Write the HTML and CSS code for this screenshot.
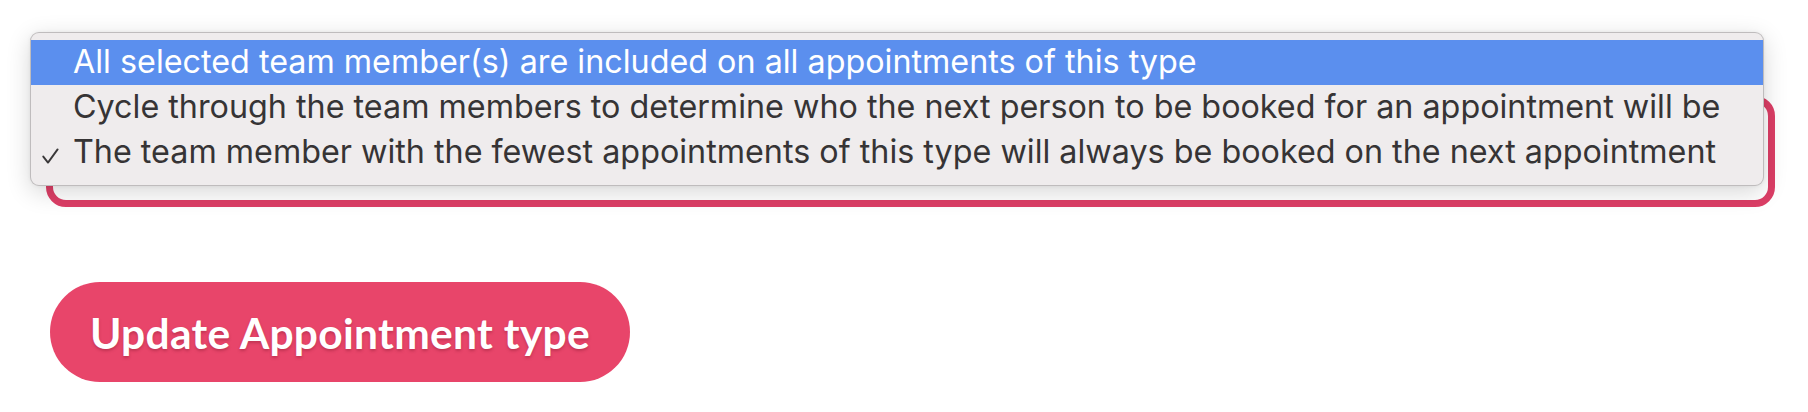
FILE: index.html
```html
<!DOCTYPE html>
<html lang="en">
<head>
<meta charset="utf-8">
<title>Appointment type</title>
<link rel="stylesheet" href="styles.css">
</head>
<body>
<div class="page">
  <div class="select"></div>
  <button class="btn" type="button">Update Appointment type</button>
</div>
<div class="menu" role="listbox">
  <div class="opt active"><span class="mark"></span><span class="label">All selected team member(s) are included on all appointments of this type</span></div>
  <div class="opt"><span class="mark"></span><span class="label">Cycle through the team members to determine who the next person to be booked for an appointment will be</span></div>
  <div class="opt"><span class="mark"><svg class="check" width="17" height="16" viewBox="0 0 17 16"><path d="M1.3 8.6 L6 14.6 L15.6 1.4" fill="none" stroke="#3a3839" stroke-width="1.9" stroke-linecap="round" stroke-linejoin="round"/></svg></span><span class="label">The team member with the fewest appointments of this type will always be booked on the next appointment</span></div>
</div>
</body>
</html>
```

FILE: styles.css
```css
html, body {
  margin: 0;
  padding: 0;
  background: #ffffff;
}

body {
  width: 1808px;
  height: 412px;
  overflow: hidden;
  position: relative;
}

.page {
  padding: 96px 33px 0 46px;
  display: flex;
  flex-direction: column;
  align-items: flex-start;
}

.select {
  box-sizing: border-box;
  width: 1729px;
  height: 111px;
  border: 7px solid #dc3e66;
  border-radius: 20px;
  background: #ffffff;
}

.btn {
  margin: 75px 0 0 4px;
  box-sizing: border-box;
  width: 580px;
  height: 100px;
  border: none;
  border-radius: 50px;
  background: #e8456a;
  color: #ffffff;
  font-family: Lato, "Noto Sans", sans-serif;
  font-weight: 700;
  font-size: 42.5px;
  letter-spacing: 0.3px;
  text-shadow: 0 2px 3px rgba(120, 20, 40, 0.35);
  padding: 0;
  cursor: pointer;
}

.menu {
  position: absolute;
  top: 32px;
  left: 30px;
  width: 1734px;
  height: 154px;
  box-sizing: border-box;
  border: 1px solid rgba(0, 0, 0, 0.2);
  border-radius: 9px;
  background: #efeced;
  padding: 7px 0;
  box-shadow: 0 6px 24px rgba(0, 0, 0, 0.16), 0 0 4px rgba(0, 0, 0, 0.06);
  font-family: Inter, "Noto Sans", sans-serif;
  font-size: 32.3px;
  color: #363435;
}

.opt {
  display: flex;
  align-items: center;
  height: 45px;
  line-height: 45px;
  white-space: nowrap;
}

.opt.active {
  background: #5b8fee;
  color: #ffffff;
}

.mark {
  flex: 0 0 42px;
  box-sizing: border-box;
  padding-left: 11px;
  display: flex;
  align-items: center;
  height: 45px;
}

.check {
  display: block;
  margin-top: 6px;
}

.label {
  display: block;
  margin-top: -2px;
}
```
